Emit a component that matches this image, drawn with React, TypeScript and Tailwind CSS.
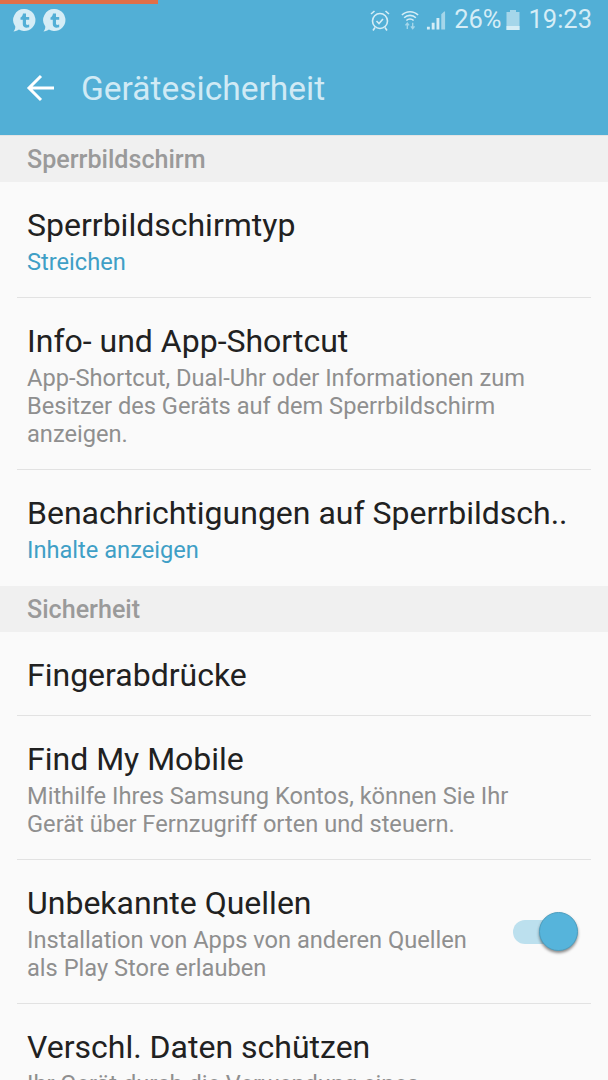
import React from 'react';

type RowProps = {
  title: string;
  sub?: string[];
  accent?: boolean;
  last?: boolean;
  toggle?: boolean;
  heightClass: string;
};

function SectionHeader({ label }: { label: string }) {
  return (
    <div className="flex h-[46px] items-center bg-[#f0f0f0] pl-[27px] pt-[2px] text-[25.100px] font-medium text-[#9a9a9a]">
      {label}
    </div>
  );
}

function Row({ title, sub, accent, last, toggle, heightClass }: RowProps) {
  return (
    <div className={`relative mx-[17px] shrink-0 px-[10px] pt-[22px] ${heightClass} ${last ? '' : 'border-b border-[#e2e2e2]'}`}>
      <div className="mb-[2px] whitespace-nowrap text-[32px] leading-[42px] text-[#212121]">{title}</div>
      {sub?.map((line) => (
        <div
          key={line}
          className={`whitespace-nowrap text-[23.650px] leading-[28px] ${accent ? 'text-[#3f9fc6]' : 'text-[#8f8f8f]'}`}
        >
          {line}
        </div>
      ))}
      {toggle && (
        <div className="absolute right-[13px] top-[52px] flex h-[39px] w-[65px] items-center">
          <div className="h-[24px] w-[48px] rounded-full bg-[#bce0ee]" />
          <div className="absolute right-0 top-0 h-[39px] w-[39px] rounded-full border border-[#4d9fc0] bg-[#56b4db] shadow-[0_2px_3px_rgba(0,0,0,0.45)]" />
        </div>
      )}
    </div>
  );
}

function TalkIcon() {
  return (
    <svg width="24" height="24" viewBox="0 0 24 24">
      <path d="M12.5 1a11 11 0 1 1-5.600 20.500C5.500 22.500 3.500 23.300 1.500 23.500 2.800 22 3.300 20.500 3.300 18.500A11 11 0 0 1 12.500 1z" fill="#d5edf6" />
      <path d="M11 5.500h3v3.500h3.200v2.800H14v4c0 1.200 1.200 1.400 3.200.8v2.600c-3.400 1.200-6.400.2-6.400-3v-4.400H8.500V9.600C9.800 9 10.700 7.500 11 5.500z" fill="#52afd6" />
    </svg>
  );
}

function StatusBar() {
  return (
    <div className="relative flex h-[38px] items-center pl-[12px] pr-[16px]">
      <div className="absolute left-0 top-0 h-[4px] w-[158px] bg-[#e06f48]" />
      <div className="mt-[2px] flex gap-[6px]">
        <TalkIcon />
        <TalkIcon />
      </div>
      <div className="ml-auto mt-[2px] flex items-center text-[#d5edf6]">
        {/* Wecker */}
        <svg width="20" height="22" viewBox="0 0 20 22" fill="none" stroke="currentColor" strokeWidth="1.600" className="mr-[11px]">
          <circle cx="10" cy="12" r="7.500" />
          <path d="M6.500 12l2.500 2.500 4-4.500M1 5l3.500-3M19 5l-3.500-3M5 18.500l-2 3M15 18.500l2 3" />
        </svg>
        {/* WLAN */}
        <svg width="18" height="22" viewBox="0 0 20 22" fill="none" className="mr-[7px]">
          <path d="M1 5.500c5-5 13-5 18 0M3.500 8.500c3.500-3.500 9.500-3.500 13 0M6 11.500c2.200-2.200 5.800-2.200 8 0" stroke="currentColor" strokeWidth="1.700" />
          <path d="M7 21v-6M5 17l2-2.500L9 17M13 14v6M11 18l2 2.500 2-2.500" stroke="#a5d6ea" strokeWidth="1.500" />
        </svg>
        {/* Signal */}
        <svg width="21" height="22" viewBox="0 0 22 22" className="mr-[7px]">
          <path d="M1 21h3v-3H1zM6 21h3v-7H6zM11 21h3V9h-3z" fill="currentColor" />
          <path d="M16 21h4V2h-1l-3 3z" fill="#a5d6ea" />
        </svg>
        <span className="text-[25.500px] leading-none">26%</span>
        {/* Akku */}
        <svg width="14" height="22" viewBox="0 0 14 22" className="ml-[5px] mr-[8px]">
          <path d="M4 1h6v2h3.500v18H.5V3H4z" fill="#a5d6ea" />
          <path d="M.5 17h13v4H.5z" fill="currentColor" />
        </svg>
        <span className="text-[25.500px] leading-none">19:23</span>
      </div>
    </div>
  );
}

export default function App() {
  return (
    <div className="flex h-[1080px] w-[608px] flex-col overflow-hidden bg-[#fafafa] font-['Roboto',sans-serif]">
      {/* Kopfzeile */}
      <div className="h-[136px] shrink-0 border-b border-[#e4e4e4] bg-[#52afd6]">
        <StatusBar />
        <div className="flex h-[97px] items-center pl-[26px] pt-[6px]">
          <svg width="29" height="28" viewBox="0 0 29 28" fill="none" stroke="#ffffff" strokeWidth="3" className="mb-[4px]">
            <path d="M28 14H3M15 2L3 14l12 12" />
          </svg>
          <div className="ml-[26px] text-[33.500px] text-[#d0eaf5]">Gerätesicherheit</div>
        </div>
      </div>

      <SectionHeader label="Sperrbildschirm" />
      <Row heightClass="h-[116px]" title="Sperrbildschirmtyp" sub={['Streichen']} accent />
      <Row
        heightClass="h-[172px]"
        title="Info- und App-Shortcut"
        sub={['App-Shortcut, Dual-Uhr oder Informationen zum', 'Besitzer des Geräts auf dem Sperrbildschirm', 'anzeigen.']}
      />
      <Row heightClass="h-[116px]" title="Benachrichtigungen auf Sperrbildsch.." sub={['Inhalte anzeigen']} accent last />

      <SectionHeader label="Sicherheit" />
      <Row heightClass="h-[84px]" title="Fingerabdrücke" />
      <Row
        heightClass="h-[144px]"
        title="Find My Mobile"
        sub={['Mithilfe Ihres Samsung Kontos, können Sie Ihr', 'Gerät über Fernzugriff orten und steuern.']}
      />
      <Row
        heightClass="h-[144px]"
        title="Unbekannte Quellen"
        sub={['Installation von Apps von anderen Quellen', 'als Play Store erlauben']}
        toggle
      />
      <Row heightClass="h-[76px]" title="Verschl. Daten schützen" sub={['Ihr Gerät durch die Verwendung eines']} last />
    </div>
  );
}
